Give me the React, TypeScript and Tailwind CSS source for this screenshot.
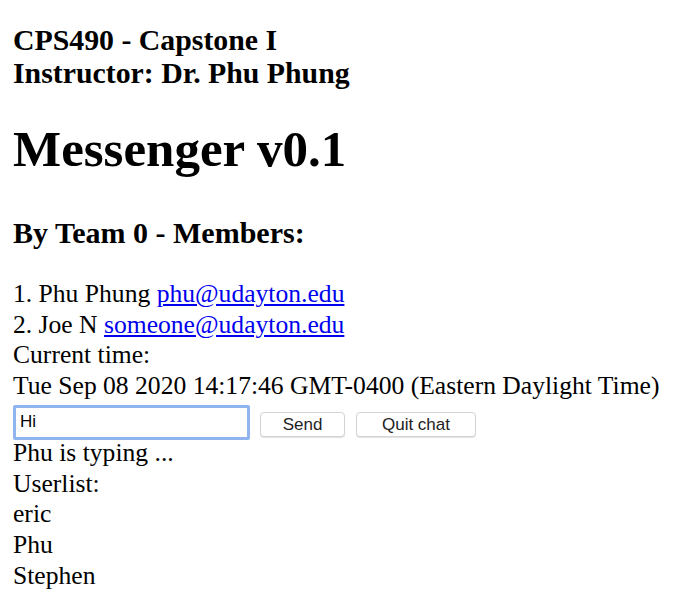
const members = [
  { name: "1. Phu Phung", email: "phu@udayton.edu" },
  { name: "2. Joe N", email: "someone@udayton.edu" },
];

const users = ["eric", "Phu", "Stephen"];

export default function App() {
  return (
    <div className="min-h-screen bg-white px-[13px] pt-[23px] font-['Liberation_Serif',serif] text-black">
      <div className="text-[29.8px] font-bold leading-[33px]">
        CPS490 - Capstone I
        <br />
        Instructor: Dr. Phu Phung
      </div>

      <h1 className="mt-[33px] text-[51px] font-bold leading-[55px]">Messenger v0.1</h1>

      <h3 className="mt-[40px] text-[30px] font-bold leading-[32px]">By Team 0 - Members:</h3>

      <div className="mt-[30px] text-[25.6px] leading-[30.7px]">
        {members.map((m) => (
          <div key={m.email}>
            {m.name}{" "}
            <a href="#" className="text-[#0000ee] underline">
              {m.email}
            </a>
          </div>
        ))}
        <div>Current time:</div>
        <div>Tue Sep 08 2020 14:17:46 GMT-0400 (Eastern Daylight Time)</div>
      </div>

      <div className="mt-[3px] flex items-start font-['Liberation_Sans',sans-serif]">
        <input
          defaultValue="Hi"
          className="h-[35px] w-[237px] rounded-[2px] border-[3px] border-[#8fb4ee] bg-white px-[4px] text-[17px] text-black outline-none"
        />
        <button className="ml-[10px] mt-[7px] h-[25px] w-[85px] rounded-[4px] border border-[#d4d4d4] bg-white text-[17px] leading-none text-[#222] shadow-[0_1px_1px_rgba(0,0,0,0.12)]">
          Send
        </button>
        <button className="ml-[11px] mt-[7px] h-[25px] w-[120px] rounded-[4px] border border-[#d4d4d4] bg-white text-[17px] leading-none text-[#222] shadow-[0_1px_1px_rgba(0,0,0,0.12)]">
          Quit chat
        </button>
      </div>

      <div className="-mt-[2px] text-[25.6px] leading-[30.7px]">
        <div>Phu is typing ...</div>
        <div>Userlist:</div>
        {users.map((u) => (
          <div key={u}>{u}</div>
        ))}
      </div>
    </div>
  );
}
